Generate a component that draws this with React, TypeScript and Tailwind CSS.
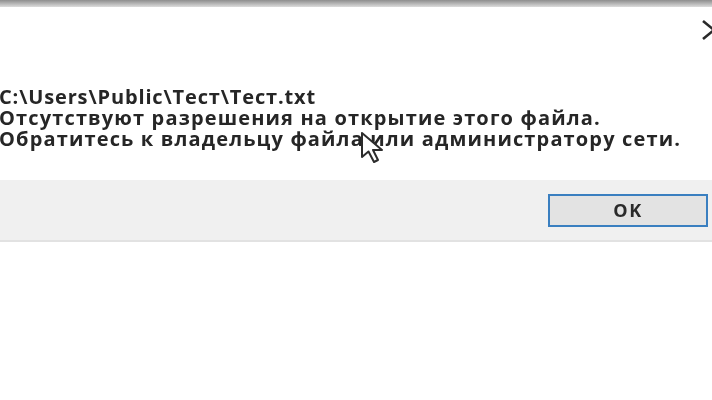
import React from "react";

export default function App() {
  return (
    <div
      className="relative w-[712px] h-[400px] overflow-hidden bg-white"
      style={{ fontFamily: '"Open Sans", "Noto Sans", sans-serif' }}
    >
      <div className="h-[7px] bg-gradient-to-b from-[#8e8e8e] via-[#b4b4b4] to-[#dcdcdc]" />
      <div className="flex h-[173px] flex-col">
        <div className="flex h-[42px] justify-end pt-[13px]">
          <svg width="14" height="20" viewBox="0 0 14 20" className="mr-[-4px]">
            <path d="M1 1 L12 10 L1 19" fill="none" stroke="#2a2a2a" strokeWidth="2.6" />
          </svg>
        </div>
        <div className="mt-[37px] flex flex-col text-[20px] leading-[21px] font-bold tracking-[1.15px] text-[#262626] blur-[0.5px]">
          <div className="-ml-[1px] tracking-[0.85px]">C:\Users\Public\Тест\Тест.txt</div>
          <div className="-ml-[1px]">Отсутствуют разрешения на открытие этого файла.</div>
          <div className="-ml-[1px]">Обратитесь к владельцу файла или администратору сети.</div>
        </div>
      </div>
      <div className="flex h-[62px] items-center justify-end border-b-2 border-[#e2e2e2] bg-[#f0f0f0] pr-[4px]">
        <div className="flex h-[33px] w-[160px] items-center justify-center border-2 border-[#3a7fc0] bg-[#e3e3e3] text-[18px] font-bold tracking-[1.5px] text-[#2a2a2a] blur-[0.5px]">
          OK
        </div>
      </div>
      <svg
        className="absolute left-[359px] top-[131px]"
        width="32"
        height="36"
        viewBox="0 0 32 36"
      >
        <path
          d="M3 2 L3 26 L9.5 20.5 L15 31 L19 29 L14 19 L23 19 Z"
          fill="#ffffff"
          stroke="#2c2c2c"
          strokeWidth="2"
          strokeLinejoin="round"
        />
      </svg>
    </div>
  );
}
